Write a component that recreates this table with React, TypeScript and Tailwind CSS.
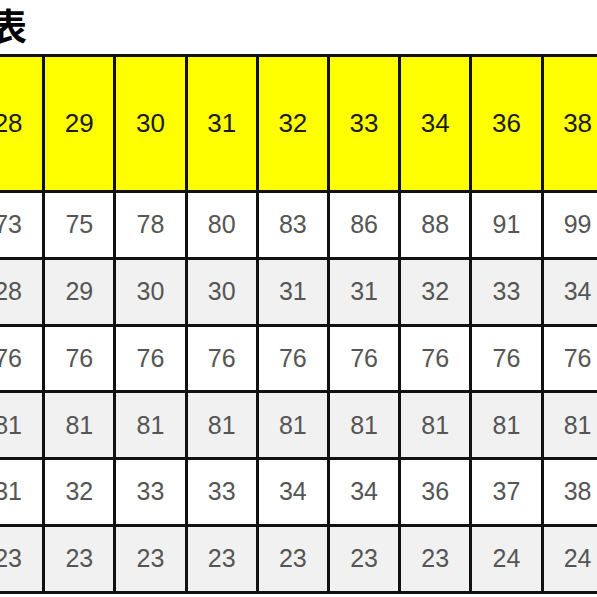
const sizes = ['28', '29', '30', '31', '32', '33', '34', '36', '38'];

const rows = [
  ['73', '75', '78', '80', '83', '86', '88', '91', '99'],
  ['28', '29', '30', '30', '31', '31', '32', '33', '34'],
  ['76', '76', '76', '76', '76', '76', '76', '76', '76'],
  ['81', '81', '81', '81', '81', '81', '81', '81', '81'],
  ['31', '32', '33', '33', '34', '34', '36', '37', '38'],
  ['23', '23', '23', '23', '23', '23', '23', '24', '24'],
];

export default function App() {
  return (
    <div className="w-[597px] h-[597px] overflow-hidden bg-white font-['Liberation_Sans',Arial,sans-serif]">
      {/* title */}
      <div className="h-[54px] -ml-[10px] pt-[1px] text-[37px] leading-[48px] font-bold text-black font-['Noto_Sans_CJK_SC',sans-serif]">
        表
      </div>

      {/* size table */}
      <div className="-ml-[29px] w-max bg-[#111111] p-[3px] grid grid-cols-[repeat(9,68.2px)] gap-[3px]">
        {sizes.map((s) => (
          <div
            key={s}
            className="h-[133px] bg-[#ffff00] flex items-center justify-center text-[26px] text-[#1a1a1a]"
          >
            {s}
          </div>
        ))}
        {rows.map((row, i) =>
          row.map((v, j) => (
            <div
              key={`${i}-${j}`}
              className={`h-[63.8px] flex items-center justify-center text-[25px] text-[#555555] ${
                i % 2 === 1 ? 'bg-[#f1f1f1]' : 'bg-white'
              }`}
            >
              {v}
            </div>
          ))
        )}
      </div>
    </div>
  );
}
